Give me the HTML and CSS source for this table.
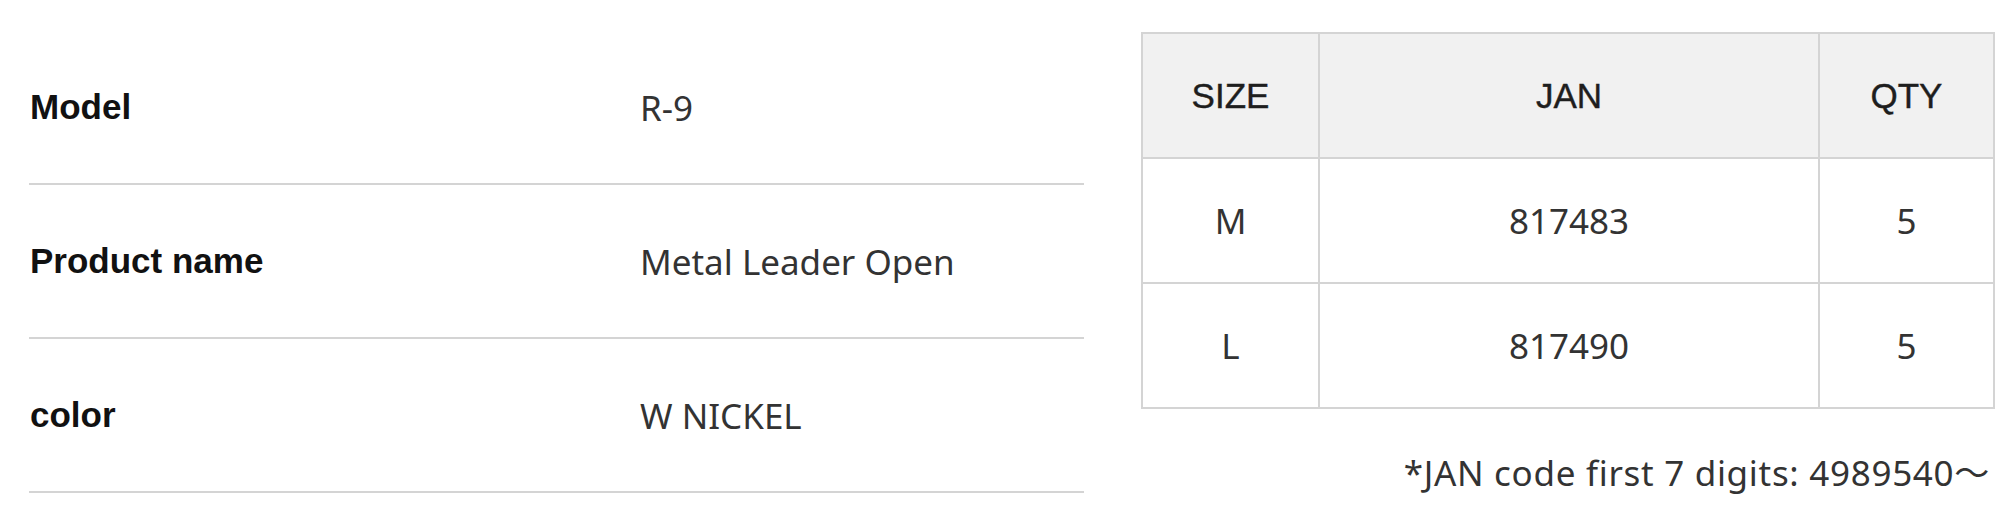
FILE: index.html
```html
<!DOCTYPE html>
<html lang="en">
<head>
<meta charset="utf-8">
<title>R-9 Metal Leader Open</title>
<link rel="stylesheet" href="styles.css">
</head>
<body>
<main class="product">
  <dl class="spec">
    <div class="spec-row">
      <dt class="spec-label">Model</dt>
      <dd class="spec-value">R-9</dd>
    </div>
    <div class="spec-row">
      <dt class="spec-label">Product name</dt>
      <dd class="spec-value">Metal Leader Open</dd>
    </div>
    <div class="spec-row">
      <dt class="spec-label">color</dt>
      <dd class="spec-value">W NICKEL</dd>
    </div>
  </dl>
  <section class="sizes">
    <table class="size-table">
      <colgroup>
        <col class="col-size">
        <col class="col-jan">
        <col class="col-qty">
      </colgroup>
      <thead>
        <tr><th>SIZE</th><th>JAN</th><th>QTY</th></tr>
      </thead>
      <tbody>
        <tr><td>M</td><td>817483</td><td>5</td></tr>
        <tr><td>L</td><td>817490</td><td>5</td></tr>
      </tbody>
    </table>
    <p class="note">*JAN code first 7 digits: 4989540～</p>
  </section>
</main>
</body>
</html>
```

FILE: styles.css
```css
html, body {
  margin: 0;
  padding: 0;
  background: #ffffff;
}

body {
  font-family: "Liberation Sans", Arial, "Noto Sans CJK JP", sans-serif;
  color: #333333;
}

.product {
  display: flex;
  align-items: flex-start;
  padding-left: 29px;
  gap: 57px;
}

/* left spec list */
.spec {
  width: 1055px;
  margin: 0;
  padding-top: 31px;
}

.spec-row {
  display: grid;
  grid-template-columns: 611px 1fr;
  align-items: center;
  height: 152px;
  border-bottom: 2px solid #d4d4d4;
}

.spec-label {
  margin: 0;
  padding-left: 1px;
  font-size: 35px;
  font-weight: bold;
  color: #111111;
}

.spec-value {
  margin: 0;
  font-family: "Noto Sans", "Noto Sans CJK JP", sans-serif;
  font-size: 35px;
  color: #333333;
}

/* right size table */
.sizes {
  width: 852px;
  padding-top: 32px;
}

.size-table {
  width: 852px;
  border-collapse: collapse;
  table-layout: fixed;
}

.col-size { width: 177px; }
.col-jan { width: 500px; }
.col-qty { width: 175px; }

.size-table th,
.size-table td {
  border: 2px solid #d4d4d4;
  height: 123px;
  padding: 0;
  text-align: center;
  vertical-align: middle;
  font-size: 35px;
}

.size-table th {
  background: #f1f1f1;
  font-weight: normal;
  color: #1e1e1e;
  font-family: "Liberation Sans", Arial, sans-serif;
  -webkit-text-stroke: 0.4px #1e1e1e;
}

.size-table td {
  font-family: "Noto Sans", "Noto Sans CJK JP", sans-serif;
  color: #333333;
}

.note {
  margin: 39px 3px 0 0;
  text-align: right;
  font-family: "Noto Sans", "Noto Sans CJK JP", sans-serif;
  font-size: 35px;
  line-height: 49px;
  letter-spacing: 0.7px;
  color: #333333;
}
```
